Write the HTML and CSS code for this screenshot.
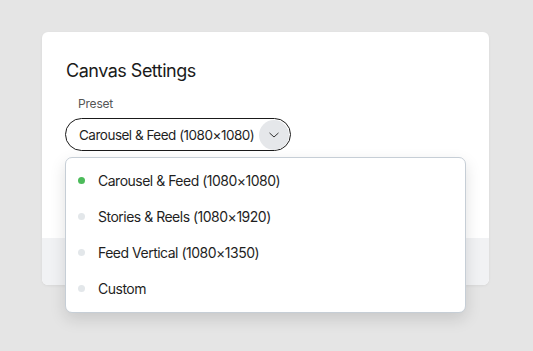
FILE: index.html
```html
<!DOCTYPE html>
<html lang="en">
<head>
    <meta charset="UTF-8">
    <meta name="viewport" content="width=device-width, initial-scale=1.0">
    <title>Canvas Settings</title>
    <link rel="stylesheet" href="styles.css">
</head>
<body>
    <div class="card">
        <div class="card-body">
            <h2 class="title">Canvas Settings</h2>
            <div class="field">
                <label class="label">Preset</label>
                <div class="select-wrap">
                    <div class="select">
                        <span class="select-text">Carousel &amp; Feed (1080×1080)</span>
                        <span class="chevron">
                            <svg width="12" height="12" viewBox="0 0 12 12" fill="none" stroke="#333" stroke-width="1" stroke-linecap="round" stroke-linejoin="round"><path d="M1.8 4.2 6 8l4.2-3.8"/></svg>
                        </span>
                    </div>
                    <ul class="menu">
                        <li class="option"><span class="dot active"></span>Carousel &amp; Feed (1080×1080)</li>
                        <li class="option"><span class="dot"></span>Stories &amp; Reels (1080×1920)</li>
                        <li class="option"><span class="dot"></span>Feed Vertical (1080×1350)</li>
                        <li class="option"><span class="dot"></span>Custom</li>
                    </ul>
                </div>
            </div>
        </div>
        <div class="card-footer"></div>
    </div>
</body>
</html>
```

FILE: styles.css
```css
html {
    background-color: #e5e5e5;
}
body {
    margin: 0;
    min-height: 351px;
    box-sizing: border-box;
    padding: 32px 0 0 42px;
    background-color: #e5e5e5;
    font-family: Inter, "Noto Sans", sans-serif;
    color: #1f1f1f;
}
.card {
    width: 447px;
    background-color: white;
    border-radius: 6px;
    box-shadow: 0 1px 3px rgba(0,0,0,0.06);
}
.card-body {
    height: 178px;
    padding: 28px 24px 0;
}
.title {
    margin: 0;
    font-size: 18px;
    line-height: 22px;
    font-weight: 400;
    letter-spacing: -0.5px;
    color: #1a1a1a;
}
.field {
    margin-top: 14px;
}
.label {
    display: block;
    margin-left: 12px;
    font-size: 12px;
    line-height: 16px;
    color: #555;
    letter-spacing: -0.2px;
}
.select-wrap {
    position: relative;
    margin-top: 6px;
    margin-left: -1px;
}
.select {
    display: inline-flex;
    align-items: center;
    justify-content: space-between;
    box-sizing: border-box;
    width: 226px;
    height: 33px;
    padding: 0 1px 0 13px;
    border: 1px solid #1a1a1a;
    border-radius: 17px;
}
.select-text {
    font-size: 13.5px;
    letter-spacing: -0.5px;
    color: #1f1f1f;
}
.chevron {
    display: flex;
    align-items: center;
    justify-content: center;
    width: 30px;
    height: 30px;
    border-radius: 50%;
    background-color: #e5e7ea;
}
.menu {
    position: absolute;
    top: 39px;
    left: 0;
    width: 401px;
    box-sizing: border-box;
    margin: 0;
    padding: 4px 0 6px;
    list-style: none;
    background-color: white;
    border: 1px solid #c6ced6;
    border-radius: 7px;
    box-shadow: 0 6px 16px rgba(0,0,0,0.13);
    z-index: 2;
}
.option {
    display: flex;
    align-items: center;
    height: 36px;
    padding-left: 12px;
    font-size: 14px;
    letter-spacing: -0.5px;
    color: #1f1f1f;
}
.dot {
    width: 7px;
    height: 7px;
    border-radius: 50%;
    background-color: #e3e7ea;
    margin-right: 13px;
}
.dot.active {
    background-color: #4cbb5a;
}
.card-footer {
    height: 47px;
    background-color: #f1f2f4;
    border-radius: 0 0 6px 6px;
}
```
